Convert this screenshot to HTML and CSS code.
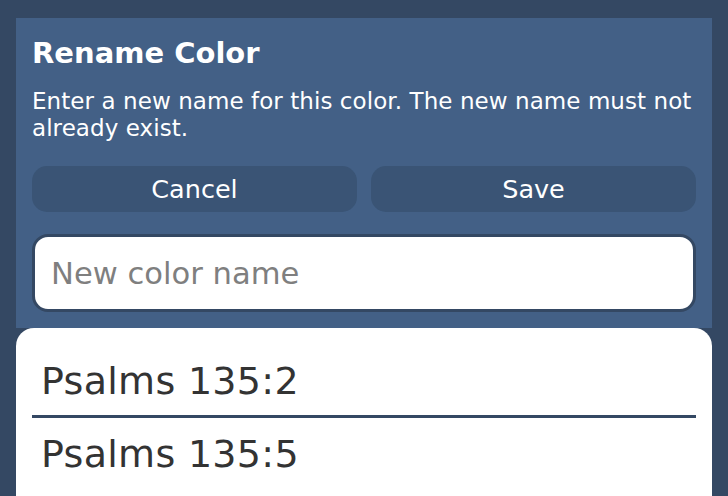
FILE: index.html
```html
<!DOCTYPE html>
<html lang="en">
<head>
<meta charset="utf-8">
<title>Rename Color</title>
<link rel="stylesheet" href="styles.css">
</head>
<body>
<div class="screen">
  <section class="dialog">
    <h1 class="dialog-title">Rename Color</h1>
    <p class="dialog-text">Enter a new name for this color. The new name must not already exist.</p>
    <div class="dialog-actions">
      <button class="btn" type="button">Cancel</button>
      <button class="btn" type="button">Save</button>
    </div>
    <input class="name-input" type="text" placeholder="New color name">
  </section>
  <ul class="verse-list">
    <li class="verse">Psalms 135:2</li>
    <li class="verse">Psalms 135:5</li>
  </ul>
</div>
</body>
</html>
```
FILE: styles.css
```css
* { box-sizing: border-box; }
html, body { margin: 0; padding: 0; }
body {
  background: #344863;
  font-family: "DejaVu Sans", Verdana, sans-serif;
  width: 728px;
  height: 496px;
  overflow: hidden;
}
.screen {
  height: 496px;
  display: flex;
  flex-direction: column;
  padding: 18px 16px 0 16px;
}
.dialog {
  background: #436086;
  padding: 18px 16px 16px 16px;
}
.dialog-title {
  margin: 0;
  color: #fff;
  font-size: 29px;
  line-height: 34px;
  font-weight: bold;
}
.dialog-text {
  margin: 18px 0 0 0;
  color: #fff;
  font-size: 23px;
  line-height: 27px;
  letter-spacing: 0.07px;
}
.dialog-actions {
  margin-top: 24px;
  display: grid;
  grid-template-columns: 1fr 1fr;
  gap: 14px;
}
.btn {
  height: 46px;
  border: none;
  border-radius: 15px;
  background: #3a5475;
  color: #fff;
  font-family: "DejaVu Sans", Verdana, sans-serif;
  font-size: 25.5px;
  line-height: 46px;
  padding: 0;
}
.name-input {
  display: block;
  width: 100%;
  height: 78px;
  margin-top: 22px;
  border: 3px solid #344863;
  border-radius: 16px;
  background: #fff;
  padding: 0 16px;
  font-family: "DejaVu Sans", Verdana, sans-serif;
  font-size: 30.6px;
  color: #333;
  outline: none;
}
.name-input::placeholder { color: #7f7f7f; }
.verse-list {
  flex: 1;
  list-style: none;
  margin: 0;
  padding: 17px 0 0 0;
  background: #fff;
  border-radius: 18px 18px 0 0;
}
.verse {
  margin: 0 16px;
  padding: 13px 0 11px 9px;
  font-size: 38px;
  line-height: 46px;
  letter-spacing: 0.3px;
  color: #333;
  border-bottom: 3px solid #344863;
}
.verse:last-child { border-bottom: none; }
```
